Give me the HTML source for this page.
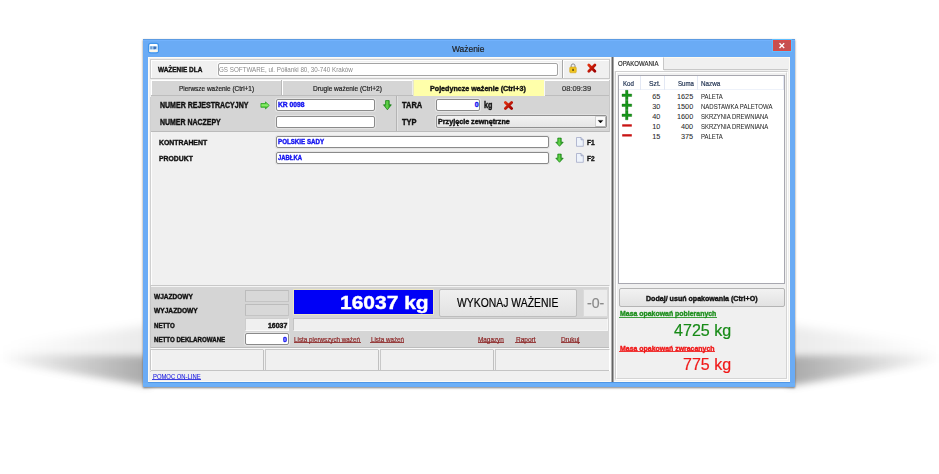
<!DOCTYPE html>
<html><head><meta charset="utf-8">
<style>
*{margin:0;padding:0;box-sizing:border-box}
html,body{width:939px;height:474px;background:#fff;overflow:hidden;position:relative;font-family:"Liberation Sans",sans-serif;}
.a{position:absolute}
.t{position:absolute;white-space:nowrap;line-height:1;transform-origin:0 0}
</style></head><body>
<svg class="a" style="left:0;top:0" width="939" height="474">
 <defs>
 <filter id="bl" x="-50%" y="-50%" width="200%" height="200%"><feGaussianBlur stdDeviation="5"/></filter>
 <filter id="bl2" x="-50%" y="-50%" width="200%" height="200%"><feGaussianBlur stdDeviation="3.5"/></filter>
 <linearGradient id="gl" x1="143" y1="0" x2="0" y2="0" gradientUnits="userSpaceOnUse"><stop offset="0" stop-color="#000" stop-opacity="0.08"/><stop offset="1" stop-color="#000" stop-opacity="0"/></linearGradient>
 <linearGradient id="gl2" x1="143" y1="0" x2="0" y2="0" gradientUnits="userSpaceOnUse"><stop offset="0" stop-color="#000" stop-opacity="0.27"/><stop offset="1" stop-color="#000" stop-opacity="0"/></linearGradient>
 <linearGradient id="gr" x1="795" y1="0" x2="939" y2="0" gradientUnits="userSpaceOnUse"><stop offset="0" stop-color="#000" stop-opacity="0.08"/><stop offset="1" stop-color="#000" stop-opacity="0"/></linearGradient>
 <linearGradient id="gr2" x1="795" y1="0" x2="939" y2="0" gradientUnits="userSpaceOnUse"><stop offset="0" stop-color="#000" stop-opacity="0.27"/><stop offset="1" stop-color="#000" stop-opacity="0"/></linearGradient>
 </defs>
 <polygon points="150,325 150,386 0,362 0,346" fill="url(#gl)" filter="url(#bl)"/>
 <polygon points="150,356 150,386 0,362 0,354" fill="url(#gl2)" filter="url(#bl2)"/>
 <polygon points="788,325 788,386 939,362 939,346" fill="url(#gr)" filter="url(#bl)"/>
 <polygon points="788,356 788,386 939,362 939,354" fill="url(#gr2)" filter="url(#bl2)"/>
</svg>
<!-- window frame -->
<div class="a" style="left:143px;top:39px;width:652px;height:348px;background:#6aabf5;box-shadow:0 1px 2px rgba(0,0,0,.5)"></div>
<div class="a" style="left:143px;top:39px;width:652px;height:1px;background:#5c9be2"></div>
<div class="a" style="left:143px;top:40px;width:652px;height:1px;background:#72b2fc"></div>
<div class="a" style="left:772px;top:39px;width:20px;height:13px;background:#5fbfff"></div>
<div class="a" style="left:773px;top:40px;width:18px;height:11px;background:#c84f4f;border:1px solid #dc4a48"></div>
<svg class="a" style="left:778px;top:42px" width="8" height="8"><path d="M1.5,1.3 L6.2,6 M6.2,1.3 L1.5,6" stroke="#fff" stroke-width="1.35"/></svg>
<svg class="a" style="left:147px;top:42px" width="13" height="12"><rect x="1.6" y="1.4" width="9.8" height="9.4" rx="2" fill="#fff" stroke="#3e94ec" stroke-width="1.3"/><rect x="2.4" y="4" width="8.2" height="3.6" fill="#b4d8f6"/><path d="M3.2,4.4 h2.2 v2.8 h-2.2 Z" fill="#6f9fd4"/><path d="M6.4,4.4 h1.6 a1.4,1.4 0 0 1 0,2.8 h-1.6 Z" fill="#3d6fb8"/><rect x="2.4" y="8.2" width="8.2" height="1.8" fill="#fbf6e8"/></svg>
<div class="a" style="left:148px;top:382px;width:642px;height:1px;background:#4f96e6"></div>
<div class="a" style="left:143px;top:383px;width:652px;height:3px;background:#6cb0f8"></div>
<!-- client -->
<div class="a" style="left:148px;top:57px;width:642px;height:325px;background:#f0f0f0;border-left:1px solid #fdfbf5;border-top:1px solid #fdfbf5;border-right:1px solid #fdfbf5;border-bottom:1px solid #fdfbf5"></div>

<!-- LEFT: row1 panel -->
<div class="a" style="left:150px;top:59px;width:1px;height:313px;background:#d0d0d0"></div>
<div class="a" style="left:151px;top:60px;width:1px;height:311px;background:#fdfdfd"></div>
<div class="a" style="left:150px;top:59px;width:460px;height:20px;border:1px solid #cfcfcf;border-right-color:#c8c8c8;border-bottom-color:#c8c8c8"></div>
<div class="a" style="left:151px;top:60px;width:458px;height:18px;border-top:1px solid #fff;border-left:1px solid #fff"></div>
<div class="a" style="left:217px;top:62px;width:342px;height:15px;background:#fafafa;border-radius:2px"></div>
<div class="a" style="left:218px;top:63px;width:340px;height:13px;background:#fff;border:1px solid #a4a4a4;border-radius:2px"></div>
<div class="a" style="left:562px;top:60px;width:1px;height:18px;background:#a8a8a8"></div>
<div class="a" style="left:563px;top:60px;width:1px;height:18px;background:#fff"></div>

<!-- tabs strip -->
<div class="a" style="left:150px;top:79px;width:460px;height:18px;background:#f0f0f0"></div>
<div class="a" style="left:151px;top:80px;width:458px;height:16px;background:#d5d5d5;border-top:1px solid #fff;border-left:1px solid #fff"></div>
<div class="a" style="left:151px;top:95px;width:458px;height:1px;background:#bdbdbd"></div>
<div class="a" style="left:281px;top:80px;width:1px;height:15px;background:#b9b9b9"></div>
<div class="a" style="left:282px;top:80px;width:1px;height:15px;background:#fff"></div>
<div class="a" style="left:412px;top:80px;width:1px;height:15px;background:#ececec"></div>
<div class="a" style="left:413px;top:80px;width:131px;height:16px;background:#ffffaa;border-left:1px solid #e8e8c8"></div>
<div class="a" style="left:544px;top:80px;width:1px;height:16px;background:#f8f8f8"></div>
<div class="a" style="left:545px;top:80px;width:64px;height:15px;background:#d5d5d5;border-top:1px solid #fff"></div>
<div class="a" style="left:609px;top:80px;width:1px;height:16px;background:#c8c8c8"></div>

<!-- reg section -->
<div class="a" style="left:151px;top:96px;width:459px;height:36px;background:#d5d5d5;border-bottom:1px solid #bbbbbb;border-right:1px solid #c8c8c8"></div>
<div class="a" style="left:396px;top:96px;width:1px;height:35px;background:#b4b4b4"></div>
<div class="a" style="left:397px;top:96px;width:1px;height:35px;background:#e2e2e2"></div>
<div class="a" style="left:276px;top:99px;width:99px;height:12px;background:#fff;border:1px solid #8a8a8a;border-radius:2px;box-shadow:0 0 0 1px #e4e4e4"></div>
<div class="a" style="left:276px;top:116px;width:99px;height:12px;background:#fff;border:1px solid #8a8a8a;border-radius:2px;box-shadow:0 0 0 1px #e4e4e4"></div>
<div class="a" style="left:436px;top:99px;width:44px;height:12px;background:#fff;border:1px solid #8a8a8a;border-radius:2px;box-shadow:0 0 0 1px #e4e4e4"></div>
<div class="a" style="left:436px;top:115px;width:171px;height:13px;background:linear-gradient(#f2f2f2,#e6e6e6);border:1px solid #909090;border-radius:2px;box-shadow:0 0 0 1px #e0e0e0"></div>
<div class="a" style="left:595px;top:116px;width:11px;height:11px;background:#fbfbfb;border:1px solid #b4b4b4;border-top-color:#d8d8d8;border-left-color:#d0d0d0"></div>
<svg class="a" style="left:596px;top:119px" width="9" height="5"><path d="M2.2,1.4 H6.8 L4.5,3.9 Z" fill="#000" stroke="#000" stroke-width="0.4"/></svg>

<!-- icons row reg -->
<svg class="a" style="left:0;top:0" width="939" height="474">
 <defs>
  <linearGradient id="ga" x1="0" y1="0" x2="0" y2="1"><stop offset="0" stop-color="#3cc428"/><stop offset="0.5" stop-color="#8af068"/><stop offset="1" stop-color="#149a0c"/></linearGradient>
  <linearGradient id="gd" x1="0" y1="0" x2="1" y2="0"><stop offset="0" stop-color="#169a10"/><stop offset="0.45" stop-color="#6ad850"/><stop offset="1" stop-color="#0c8008"/></linearGradient>
  <linearGradient id="gx" x1="0" y1="0" x2="1" y2="1"><stop offset="0" stop-color="#e03010"/><stop offset="1" stop-color="#a00000"/></linearGradient>
 </defs>
 <path d="M260.9,103.5 H265.5 V101.9 L269.3,105.4 L265.5,108.9 V107.3 H260.9 Z" fill="url(#ga)" stroke="#1c9a14" stroke-width="0.7"/>
 <path d="M385.6,100.6 H389.2 V104.8 H391.3 L387.4,109.8 L383.5,104.8 H385.6 Z" fill="url(#gd)" stroke="#0a7a08" stroke-width="0.7"/>
 <path d="M557.8,138.1 H561.2 V142.2 H563.2 L559.5,146.3 L555.8,142.2 H557.8 Z" fill="url(#gd)" stroke="#0a7a08" stroke-width="0.7"/>
 <path d="M557.8,154.1 H561.2 V158.2 H563.2 L559.5,162.3 L555.8,158.2 H557.8 Z" fill="url(#gd)" stroke="#0a7a08" stroke-width="0.7"/>
 <path d="M505.4,102.4 L511.6,108.6 M511.6,102.4 L505.4,108.6" stroke="url(#gx)" stroke-width="2.8" stroke-linecap="round"/>
 <path d="M588.8,65.1 L594.9,71.2 M594.9,65.1 L588.8,71.2" stroke="url(#gx)" stroke-width="2.8" stroke-linecap="round"/>
 <path d="M571.2,67.2 V65.8 A1.9,1.9 0 0 1 575,65.8 V67.2" fill="none" stroke="#8a8a8a" stroke-width="1"/>
 <rect x="569.7" y="67" width="6.6" height="5.8" rx="1" fill="#f0c420" stroke="#c89a10" stroke-width="0.5"/>
 <rect x="572.4" y="68.8" width="1.3" height="2.2" fill="#4a3a10"/>
 <path d="M576.5,137.5 H581 L583.3,139.8 V146.3 H576.5 Z" fill="#eef3fb" stroke="#a3aac8" stroke-width="0.8"/>
 <path d="M581,137.5 V139.8 H583.3" fill="#c8d0e8" stroke="#8890b0" stroke-width="0.6"/>
 <path d="M576.5,153.5 H581 L583.3,155.8 V162.3 H576.5 Z" fill="#eef3fb" stroke="#a3aac8" stroke-width="0.8"/>
 <path d="M581,153.5 V155.8 H583.3" fill="#c8d0e8" stroke="#8890b0" stroke-width="0.6"/>
</svg>

<!-- contractor inputs -->
<div class="a" style="left:276px;top:136px;width:273px;height:12px;background:#fff;border:1px solid #8a8a8a;border-radius:2px;box-shadow:0 0 0 1px #e4e4e4"></div>
<div class="a" style="left:276px;top:152px;width:273px;height:12px;background:#fff;border:1px solid #8a8a8a;border-radius:2px;box-shadow:0 0 0 1px #e4e4e4"></div>

<!-- bottom section -->
<div class="a" style="left:150px;top:285px;width:460px;height:64px;border:1px solid #c8c8c8;border-right-color:#fafafa;border-bottom-color:#fafafa"></div>
<div class="a" style="left:151px;top:286px;width:458px;height:62px;background:#d5d5d5;border-top:1px solid #f4f4f4;border-bottom:1px solid #bdbdbd"></div>
<div class="a" style="left:245px;top:290px;width:44px;height:12px;background:#d8d8d8;border:1px solid #c4c4c4;border-top-color:#bcbcbc;border-left-color:#bcbcbc"></div>
<div class="a" style="left:245px;top:304px;width:44px;height:12px;background:#d8d8d8;border:1px solid #c4c4c4;border-top-color:#bcbcbc;border-left-color:#bcbcbc"></div>
<div class="a" style="left:245px;top:318px;width:44px;height:13px;background:#f0f0f0;border:1px solid #cdcdcd;border-bottom-color:#fafafa;border-right-color:#fafafa"></div>
<div class="a" style="left:245px;top:333px;width:44px;height:12px;background:#fff;border:1px solid #8a8a8a;border-radius:2px;box-shadow:0 0 0 1px #e4e4e4"></div>
<div class="a" style="left:293px;top:289px;width:141px;height:26px;background:#ece6c0"></div>
<div class="a" style="left:294px;top:290px;width:139px;height:24px;background:#0000f6"></div>
<div class="a" style="left:293px;top:318px;width:315px;height:13px;background:#efefef;border:1px solid #c4c4c4;border-right-color:#f6f6f6;border-bottom-color:#f6f6f6"></div>
<div class="a" style="left:439px;top:289px;width:138px;height:28px;background:linear-gradient(#f0f0f0,#e2e2e2);border:1px solid #bdbdbd;border-radius:2px"></div>
<div class="a" style="left:583px;top:289px;width:25px;height:28px;background:#ececec;border:1px solid #dadada"></div>

<!-- footer boxes -->
<div class="a" style="left:150px;top:349px;width:114px;height:22px;border:1px solid #c8c8c8;border-right-color:#fff;border-bottom-color:#fff"></div>
<div class="a" style="left:265px;top:349px;width:114px;height:22px;border:1px solid #c8c8c8;border-right-color:#fff;border-bottom-color:#fff"></div>
<div class="a" style="left:380px;top:349px;width:114px;height:22px;border:1px solid #c8c8c8;border-right-color:#fff;border-bottom-color:#fff"></div>
<div class="a" style="left:495px;top:349px;width:115px;height:22px;border:1px solid #c8c8c8;border-right-color:#fff;border-bottom-color:#fff"></div>
<div class="a" style="left:263px;top:350px;width:1px;height:21px;background:#c0c0c0"></div>
<div class="a" style="left:378px;top:350px;width:1px;height:21px;background:#c0c0c0"></div>
<div class="a" style="left:493px;top:350px;width:1px;height:21px;background:#c0c0c0"></div>
<div class="a" style="left:151px;top:370px;width:458px;height:1px;background:#c4c4c4"></div>

<!-- splitter -->
<div class="a" style="left:610px;top:57px;width:1px;height:325px;background:#fafafa"></div>
<div class="a" style="left:611px;top:57px;width:1px;height:325px;background:#b0b0b0"></div>
<div class="a" style="left:612px;top:57px;width:1px;height:325px;background:#646464"></div>
<div class="a" style="left:613px;top:57px;width:1px;height:325px;background:#a8a8a8"></div>

<!-- RIGHT PANEL -->
<div class="a" style="left:614px;top:57px;width:50px;height:14px;background:#fff"></div>
<div class="a" style="left:663px;top:57px;width:125px;height:13px;background:#f0f0f0;border-left:1px solid #c8c8c8;border-bottom:1px solid #c8c8c8;border-top:1px solid #fdfaf0"></div>
<div class="a" style="left:615px;top:71px;width:173px;height:309px;background:#f0f0f0;border:1px solid #cfcfcf;border-right-color:#fdfdfd;border-bottom-color:#fdfdfd"></div>
<div class="a" style="left:616px;top:72px;width:171px;height:307px;border:1px solid #fff;border-right-color:#d4d4d4;border-bottom-color:#d4d4d4"></div>

<div class="a" style="left:618px;top:75px;width:167px;height:209px;background:#fff;border:1px solid #a8a8b0"></div>
<div class="a" style="left:619px;top:76px;width:165px;height:14px;background:#fff;border-bottom:1px solid #eef2fa"></div>
<div class="a" style="left:640px;top:76px;width:1px;height:14px;background:#e3e8f4"></div>
<div class="a" style="left:664px;top:76px;width:1px;height:14px;background:#e3e8f4"></div>
<div class="a" style="left:697px;top:76px;width:1px;height:14px;background:#e3e8f4"></div>
<div class="a" style="left:783px;top:76px;width:1px;height:14px;background:#e3e8f4"></div>
<svg class="a" style="left:0;top:0" width="939" height="474">
 <g fill="#17941a" stroke="#0b6e0b" stroke-width="0.35"><path d="M625.5,90.3 h2.5 v3.7 h3.7 v2.5 h-3.7 v3.3 h-2.5 v-3.3 h-3.5 v-2.5 h3.5 Z"/><path d="M625.5,100.3 h2.5 v3.7 h3.7 v2.5 h-3.7 v3.3 h-2.5 v-3.3 h-3.5 v-2.5 h3.5 Z"/><path d="M625.5,110.3 h2.5 v3.7 h3.7 v2.5 h-3.7 v3.3 h-2.5 v-3.3 h-3.5 v-2.5 h3.5 Z"/></g>
 <rect x="622.2" y="124.3" width="9.6" height="2.3" fill="#c81414"/>
 <rect x="622.2" y="134.2" width="9.6" height="2.3" fill="#c81414"/>
</svg>
<div class="a" style="left:619px;top:288px;width:166px;height:19px;background:linear-gradient(#f2f2f2,#e2e2e2);border:1px solid #b4b4b4;border-radius:2px"></div>
<div class="t" style="left:452.30px;top:44px;font-size:9.5px;font-weight:normal;color:#1e1e1e;transform:scaleX(0.8838);-webkit-text-stroke-width:0.2px;">Ważenie</div>
<div class="t" style="left:158.20px;top:66px;font-size:7.5px;font-weight:bold;color:#111;transform:scaleX(0.8577);-webkit-text-stroke-width:0.4px;">WAŻENIE DLA</div>
<div class="t" style="left:218.70px;top:66px;font-size:7.2px;font-weight:normal;color:#8a8a8a;transform:scaleX(0.8695);">GS SOFTWARE, ul. Półłanki 80, 30-740 Kraków</div>
<div class="t" style="left:178.50px;top:85px;font-size:7.3px;font-weight:normal;color:#222;transform:scaleX(0.8835);-webkit-text-stroke-width:0.2px;">Pierwsze ważenie (Ctrl+1)</div>
<div class="t" style="left:312.60px;top:85px;font-size:7.3px;font-weight:normal;color:#222;transform:scaleX(0.8961);-webkit-text-stroke-width:0.2px;">Drugie ważenie (Ctrl+2)</div>
<div class="t" style="left:430.10px;top:85px;font-size:7.5px;font-weight:bold;color:#111;transform:scaleX(0.9525);-webkit-text-stroke-width:0.4px;">Pojedyncze ważenie (Ctrl+3)</div>
<div class="t" style="left:562.00px;top:85px;font-size:7.3px;font-weight:normal;color:#333;transform:scaleX(1.0250);-webkit-text-stroke-width:0.2px;">08:09:39</div>
<div class="t" style="left:160.10px;top:101px;font-size:8.3px;font-weight:bold;color:#111;transform:scaleX(0.8448);-webkit-text-stroke-width:0.4px;">NUMER REJESTRACYJNY</div>
<div class="t" style="left:160.10px;top:118px;font-size:8.3px;font-weight:bold;color:#111;transform:scaleX(0.8397);-webkit-text-stroke-width:0.4px;">NUMER NACZEPY</div>
<div class="t" style="left:278.40px;top:101px;font-size:7.0px;font-weight:bold;color:#1414f0;transform:scaleX(0.9571);-webkit-text-stroke-width:0.4px;">KR 0098</div>
<div class="t" style="left:402.00px;top:101px;font-size:8.3px;font-weight:bold;color:#111;transform:scaleX(0.9000);-webkit-text-stroke-width:0.4px;">TARA</div>
<div class="t" style="left:474.70px;top:101px;font-size:7.0px;font-weight:bold;color:#1414f0;-webkit-text-stroke-width:0.4px;">0</div>
<div class="t" style="left:483.50px;top:101px;font-size:8.3px;font-weight:bold;color:#111;transform:scaleX(0.8700);-webkit-text-stroke-width:0.4px;">kg</div>
<div class="t" style="left:402.00px;top:118px;font-size:8.3px;font-weight:bold;color:#111;transform:scaleX(0.9000);-webkit-text-stroke-width:0.4px;">TYP</div>
<div class="t" style="left:438.00px;top:118px;font-size:7.3px;font-weight:bold;color:#111;transform:scaleX(0.9836);-webkit-text-stroke-width:0.4px;">Przyjęcie zewnętrzne</div>
<div class="t" style="left:158.90px;top:139px;font-size:7.8px;font-weight:bold;color:#111;transform:scaleX(0.8818);-webkit-text-stroke-width:0.4px;">KONTRAHENT</div>
<div class="t" style="left:159.00px;top:155px;font-size:7.8px;font-weight:bold;color:#111;transform:scaleX(0.8769);-webkit-text-stroke-width:0.4px;">PRODUKT</div>
<div class="t" style="left:278.20px;top:138px;font-size:7.0px;font-weight:bold;color:#1414f0;transform:scaleX(0.8846);-webkit-text-stroke-width:0.4px;">POLSKIE SADY</div>
<div class="t" style="left:278.20px;top:154px;font-size:7.0px;font-weight:bold;color:#1414f0;transform:scaleX(0.8414);-webkit-text-stroke-width:0.4px;">JABŁKA</div>
<div class="t" style="left:587.00px;top:139px;font-size:8.0px;font-weight:bold;color:#111;transform:scaleX(0.8200);-webkit-text-stroke-width:0.4px;">F1</div>
<div class="t" style="left:587.00px;top:155px;font-size:8.0px;font-weight:bold;color:#111;transform:scaleX(0.8200);-webkit-text-stroke-width:0.4px;">F2</div>
<div class="t" style="left:154.00px;top:293px;font-size:7.0px;font-weight:bold;color:#111;transform:scaleX(0.9333);-webkit-text-stroke-width:0.4px;">WJAZDOWY</div>
<div class="t" style="left:154.00px;top:307px;font-size:7.0px;font-weight:bold;color:#111;transform:scaleX(0.9457);-webkit-text-stroke-width:0.4px;">WYJAZDOWY</div>
<div class="t" style="left:154.00px;top:322px;font-size:7.0px;font-weight:bold;color:#111;transform:scaleX(0.8750);-webkit-text-stroke-width:0.4px;">NETTO</div>
<div class="t" style="left:154.00px;top:336px;font-size:7.0px;font-weight:bold;color:#111;transform:scaleX(0.8768);-webkit-text-stroke-width:0.4px;">NETTO DEKLAROWANE</div>
<div class="t" style="left:268.00px;top:322px;font-size:7.0px;font-weight:bold;color:#111;transform:scaleX(0.9900);-webkit-text-stroke-width:0.4px;">16037</div>
<div class="t" style="left:283.30px;top:336px;font-size:7.0px;font-weight:bold;color:#1414f0;transform:scaleX(1.0250);-webkit-text-stroke-width:0.4px;">0</div>
<div class="t" style="left:340.44px;top:294px;font-size:18.0px;font-weight:bold;color:#fff;transform:scaleX(1.1649);-webkit-text-stroke-width:0.4px;">16037 kg</div>
<div class="t" style="left:457.30px;top:297px;font-size:12.6px;font-weight:normal;color:#000;transform:scaleX(0.8260);-webkit-text-stroke-width:0.2px;">WYKONAJ WAŻENIE</div>
<div class="t" style="left:586.80px;top:296px;font-size:14.5px;font-weight:normal;color:#8a8a8a;transform:scaleX(0.9778);-webkit-text-stroke-width:0.2px;">-0-</div>
<div class="t" style="left:294.40px;top:336px;font-size:7.2px;font-weight:normal;color:#8b2323;transform:scaleX(0.8737);-webkit-text-stroke-width:0.2px;">Lista pierwszych ważeń</div><div class="a" style="left:293.9px;top:342px;width:67.4px;height:1px;background:#8b2323;opacity:.85"></div>
<div class="t" style="left:370.70px;top:336px;font-size:7.2px;font-weight:normal;color:#8b2323;transform:scaleX(0.8711);-webkit-text-stroke-width:0.2px;">Lista ważeń</div><div class="a" style="left:370.2px;top:342px;width:34.1px;height:1px;background:#8b2323;opacity:.85"></div>
<div class="t" style="left:478.20px;top:336px;font-size:7.2px;font-weight:normal;color:#8b2323;transform:scaleX(0.8862);-webkit-text-stroke-width:0.2px;">Magazyn</div><div class="a" style="left:477.7px;top:342px;width:26.7px;height:1px;background:#8b2323;opacity:.85"></div>
<div class="t" style="left:515.60px;top:336px;font-size:7.2px;font-weight:normal;color:#8b2323;transform:scaleX(0.9091);-webkit-text-stroke-width:0.2px;">Raport</div><div class="a" style="left:515.1px;top:342px;width:21.0px;height:1px;background:#8b2323;opacity:.85"></div>
<div class="t" style="left:561.10px;top:336px;font-size:7.2px;font-weight:normal;color:#8b2323;transform:scaleX(0.8857);-webkit-text-stroke-width:0.2px;">Drukuj</div><div class="a" style="left:560.6px;top:342px;width:19.6px;height:1px;background:#8b2323;opacity:.85"></div>
<div class="t" style="left:152.90px;top:373px;font-size:7.0px;font-weight:normal;color:#2020e0;transform:scaleX(0.8386);-webkit-text-stroke-width:0.08px;">POMOC ON-LINE</div><div class="a" style="left:152.4px;top:379px;width:48.8px;height:1px;background:#2020e0;opacity:.85"></div>
<div class="t" style="left:617.50px;top:60px;font-size:7.0px;font-weight:normal;color:#333;transform:scaleX(0.8604);-webkit-text-stroke-width:0.2px;">OPAKOWANIA</div>
<div class="t" style="left:622.60px;top:80px;font-size:7.2px;font-weight:normal;color:#1e3050;transform:scaleX(0.8538);-webkit-text-stroke-width:0.2px;">Kod</div>
<div class="t" style="left:649.30px;top:80px;font-size:7.2px;font-weight:normal;color:#1e3050;transform:scaleX(0.9417);-webkit-text-stroke-width:0.2px;">Szt.</div>
<div class="t" style="left:677.50px;top:80px;font-size:7.2px;font-weight:normal;color:#1e3050;transform:scaleX(0.8474);-webkit-text-stroke-width:0.2px;">Suma</div>
<div class="t" style="left:700.80px;top:80px;font-size:7.2px;font-weight:normal;color:#1e3050;transform:scaleX(0.8727);-webkit-text-stroke-width:0.2px;">Nazwa</div>
<div class="t" style="left:645.80px;top:295px;font-size:7.5px;font-weight:bold;color:#111;transform:scaleX(0.9445);-webkit-text-stroke-width:0.4px;">Dodaj/ usuń opakowania (Ctrl+O)</div>
<div class="t" style="left:619.90px;top:310px;font-size:7.6px;font-weight:bold;color:#1f8f1f;transform:scaleX(0.9132);-webkit-text-stroke-width:0.4px;">Masa opakowań pobieranych</div><div class="a" style="left:619.4px;top:317px;width:97.8px;height:1px;background:#1f8f1f;opacity:.85"></div>
<div class="t" style="left:674.30px;top:322px;font-size:16.5px;font-weight:normal;color:#178a17;transform:scaleX(0.9741);-webkit-text-stroke-width:0.2px;">4725 kg</div>
<div class="t" style="left:619.70px;top:345px;font-size:7.6px;font-weight:bold;color:#f01818;transform:scaleX(0.9144);-webkit-text-stroke-width:0.4px;">Masa opakowań zwracanych</div><div class="a" style="left:619.2px;top:351px;width:96.1px;height:1px;background:#f01818;opacity:.85"></div>
<div class="t" style="left:683.20px;top:356px;font-size:16.5px;font-weight:normal;color:#f01818;transform:scaleX(0.9714);-webkit-text-stroke-width:0.2px;">775 kg</div>
<div class="t" style="left:652.30px;top:93px;font-size:7.3px;font-weight:normal;color:#2a2a2a;-webkit-text-stroke-width:0.05px;">65</div>
<div class="t" style="left:677.00px;top:93px;font-size:7.3px;font-weight:normal;color:#2a2a2a;-webkit-text-stroke-width:0.05px;">1625</div>
<div class="t" style="left:700.80px;top:93px;font-size:7.3px;font-weight:normal;color:#2a2a2a;transform:scaleX(0.8111);-webkit-text-stroke-width:0.05px;">PALETA</div>
<div class="t" style="left:652.30px;top:103px;font-size:7.3px;font-weight:normal;color:#2a2a2a;-webkit-text-stroke-width:0.05px;">30</div>
<div class="t" style="left:677.00px;top:103px;font-size:7.3px;font-weight:normal;color:#2a2a2a;-webkit-text-stroke-width:0.05px;">1500</div>
<div class="t" style="left:700.80px;top:103px;font-size:7.3px;font-weight:normal;color:#2a2a2a;transform:scaleX(0.8253);-webkit-text-stroke-width:0.05px;">NADSTAWKA PALETOWA</div>
<div class="t" style="left:652.30px;top:113px;font-size:7.3px;font-weight:normal;color:#2a2a2a;-webkit-text-stroke-width:0.05px;">40</div>
<div class="t" style="left:677.00px;top:113px;font-size:7.3px;font-weight:normal;color:#2a2a2a;-webkit-text-stroke-width:0.05px;">1600</div>
<div class="t" style="left:700.80px;top:113px;font-size:7.3px;font-weight:normal;color:#2a2a2a;transform:scaleX(0.8133);-webkit-text-stroke-width:0.05px;">SKRZYNIA DREWNIANA</div>
<div class="t" style="left:652.30px;top:123px;font-size:7.3px;font-weight:normal;color:#2a2a2a;-webkit-text-stroke-width:0.05px;">10</div>
<div class="t" style="left:681.00px;top:123px;font-size:7.3px;font-weight:normal;color:#2a2a2a;-webkit-text-stroke-width:0.05px;">400</div>
<div class="t" style="left:700.80px;top:123px;font-size:7.3px;font-weight:normal;color:#2a2a2a;transform:scaleX(0.8133);-webkit-text-stroke-width:0.05px;">SKRZYNIA DREWNIANA</div>
<div class="t" style="left:652.30px;top:133px;font-size:7.3px;font-weight:normal;color:#2a2a2a;-webkit-text-stroke-width:0.05px;">15</div>
<div class="t" style="left:681.00px;top:133px;font-size:7.3px;font-weight:normal;color:#2a2a2a;-webkit-text-stroke-width:0.05px;">375</div>
<div class="t" style="left:700.80px;top:133px;font-size:7.3px;font-weight:normal;color:#2a2a2a;transform:scaleX(0.8111);-webkit-text-stroke-width:0.05px;">PALETA</div>
</body></html>
